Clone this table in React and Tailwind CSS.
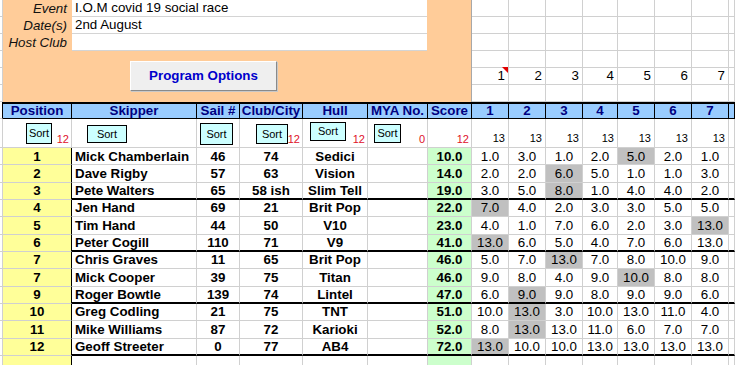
// Race results sheet - spreadsheet style view
import { Fragment } from "react";

const GRID =
  "grid grid-cols-[3px_69px_125px_43px_63px_65px_60px_44px_37px_37px_37px_35px_37px_37px_37px_6px]";

const results = [
  { pos: "1", name: "Mick Chamberlain", sail: "46", club: "74", hull: "Sedici", score: "10.0", races: ["1.0", "3.0", "1.0", "2.0", "5.0", "2.0", "1.0"], drop: 4 },
  { pos: "2", name: "Dave Rigby", sail: "57", club: "63", hull: "Vision", score: "14.0", races: ["2.0", "2.0", "6.0", "5.0", "1.0", "1.0", "3.0"], drop: 2 },
  { pos: "3", name: "Pete Walters", sail: "65", club: "58 ish", hull: "Slim Tell", score: "19.0", races: ["3.0", "5.0", "8.0", "1.0", "4.0", "4.0", "2.0"], drop: 2 },
  { pos: "4", name: "Jen Hand", sail: "69", club: "21", hull: "Brit Pop", score: "22.0", races: ["7.0", "4.0", "2.0", "3.0", "3.0", "5.0", "5.0"], drop: 0 },
  { pos: "5", name: "Tim Hand", sail: "44", club: "50", hull: "V10", score: "23.0", races: ["4.0", "1.0", "7.0", "6.0", "2.0", "3.0", "13.0"], drop: 6 },
  { pos: "6", name: "Peter Cogill", sail: "110", club: "71", hull: "V9", score: "41.0", races: ["13.0", "6.0", "5.0", "4.0", "7.0", "6.0", "13.0"], drop: 0 },
  { pos: "7", name: "Chris Graves", sail: "11", club: "65", hull: "Brit Pop", score: "46.0", races: ["5.0", "7.0", "13.0", "7.0", "8.0", "10.0", "9.0"], drop: 2 },
  { pos: "7", name: "Mick Cooper", sail: "39", club: "75", hull: "Titan", score: "46.0", races: ["9.0", "8.0", "4.0", "9.0", "10.0", "8.0", "8.0"], drop: 4 },
  { pos: "9", name: "Roger Bowtle", sail: "139", club: "74", hull: "Lintel", score: "47.0", races: ["6.0", "9.0", "9.0", "8.0", "9.0", "9.0", "6.0"], drop: 1 },
  { pos: "10", name: "Greg Codling", sail: "21", club: "75", hull: "TNT", score: "51.0", races: ["10.0", "13.0", "3.0", "10.0", "13.0", "11.0", "4.0"], drop: 1 },
  { pos: "11", name: "Mike Williams", sail: "87", club: "72", hull: "Karioki", score: "52.0", races: ["8.0", "13.0", "13.0", "11.0", "6.0", "7.0", "7.0"], drop: 1 },
  { pos: "12", name: "Geoff Streeter", sail: "0", club: "77", hull: "AB4", score: "72.0", races: ["13.0", "10.0", "10.0", "13.0", "13.0", "13.0", "13.0"], drop: 0 },
];

const headers = ["Position", "Skipper", "Sail #", "Club/City", "Hull", "MYA No.", "Score", "1", "2", "3", "4", "5", "6", "7", ""];

const SortBtn = ({ className }) => (
  <div
    className={`absolute flex items-center justify-center bg-[#ccffff] border border-black text-[11px] leading-none text-black ${className}`}
  >
    Sort
  </div>
);

const RedCount = ({ children }) => (
  <span className="absolute right-[2px] bottom-[2px] text-[11px] leading-none text-[#e0102a]">{children}</span>
);

const TopSection = () => (
  <div className={`${GRID} grid-rows-[17px_17px_17px_17px_17px_17px]`}>
    <div className="col-start-2 col-span-7 row-start-1 row-span-6 bg-[#ffcc99] border-r border-r-[#a8a8a8] flex flex-col">
      {[
        ["Event", "I.O.M covid 19 social race"],
        ["Date(s)", "2nd August"],
        ["Host Club", ""],
      ].map(([label, value]) => (
        <div key={label} className="flex h-[17px]">
          <div className="w-[69px] pr-[5px] text-right italic text-[13.33px] leading-[17px] text-[#111]">{label}</div>
          <div className="w-[355px] bg-white border-b border-b-[#d4d4d4] pl-[3px] text-[13.33px] leading-[16px] text-black">
            {value}
          </div>
        </div>
      ))}
      <button className="ml-[127px] mt-[10px] w-[147px] h-[30px] bg-[#efefef] border border-t-white border-l-white border-r-[#8a8a8a] border-b-[#8a8a8a] shadow-[1px_1px_0_#c8c8c8] text-[13.33px] font-bold text-[#0000cc]">
        Program Options
      </button>
    </div>
    {Array.from({ length: 6 }).map((_, row) => (
      <Fragment key={row}>
        <div className="border-r border-b border-[#d0d0d0]" />
        {Array.from({ length: 8 }).map((_, c) => (
          <div
            key={c}
            className="relative border-r border-b border-[#d0d0d0] flex items-center justify-end pr-[3px] text-[13.33px] leading-none text-black"
          >
            {row === 4 && c < 7 ? c + 1 : ""}
            {row === 4 && c === 0 && (
              <span className="absolute -top-px right-0 w-0 h-0 border-l-[6px] border-l-transparent border-t-[6px] border-t-[#e00000]" />
            )}
          </div>
        ))}
      </Fragment>
    ))}
  </div>
);

const HeaderRow = () => (
  <div className={`${GRID} h-[17px]`}>
    <div className="bg-white border-r border-r-black border-b border-b-[#d0d0d0]" />
    {headers.map((h, i) => (
      <div
        key={i}
        className="bg-[#99ccff] border-t-2 border-t-black border-b border-b-black border-r border-r-black flex items-center justify-center text-[13.33px] font-bold leading-none text-[#000080]"
      >
        {h}
      </div>
    ))}
  </div>
);

const SortRow = () => {
  const cell = "relative border-r border-b border-[#d0d0d0]";
  return (
    <div className={`${GRID} h-[29px]`}>
      <div className={cell} />
      <div className={cell}>
        <SortBtn className="left-[23px] top-[4px] w-[26px] h-[21px]" />
        <RedCount>12</RedCount>
      </div>
      <div className={cell}>
        <SortBtn className="left-[15px] top-[6px] w-[40px] h-[18px]" />
      </div>
      <div className={cell}>
        <SortBtn className="left-[3px] top-[4px] w-[33px] h-[22px]" />
      </div>
      <div className={cell}>
        <SortBtn className="left-[16px] top-[5px] w-[32px] h-[20px]" />
        <RedCount>12</RedCount>
      </div>
      <div className={cell}>
        <SortBtn className="left-[7px] top-[3px] w-[36px] h-[19px]" />
        <RedCount>12</RedCount>
      </div>
      <div className={cell}>
        <SortBtn className="left-[6px] top-[5px] w-[27px] h-[19px]" />
        <RedCount>0</RedCount>
      </div>
      <div className={cell}>
        <RedCount>12</RedCount>
      </div>
      {Array.from({ length: 7 }).map((_, i) => (
        <div key={i} className={cell}>
          <span className="absolute right-[3px] bottom-[3px] text-[11px] leading-none text-black">13</span>
        </div>
      ))}
      <div className={cell} />
    </div>
  );
};

const DataRow = ({ r, thick }) => {
  const b = thick ? "border-b-2 border-b-black" : "border-b border-b-[#d0d0d0]";
  const c = `border-r border-r-[#d0d0d0] ${b} flex items-center justify-center`;
  return (
    <div className={`${GRID} h-[17.33px] text-[13.33px] leading-none text-black`}>
      <div className="border-r border-b border-[#d0d0d0]" />
      <div className="bg-[#ffff99] border-r border-r-black border-b border-b-[#d0d0d0] flex items-center justify-center font-bold">
        {r?.pos}
      </div>
      <div className={`border-r border-r-[#d0d0d0] ${b} flex items-center pl-[3px] font-bold whitespace-nowrap`}>{r?.name}</div>
      <div className={`${c} font-bold`}>{r?.sail}</div>
      <div className={`${c} font-bold`}>{r?.club}</div>
      <div className={`${c} font-bold`}>{r?.hull}</div>
      <div className={c} />
      <div className={`${c} bg-[#ccffcc] font-bold`}>{r?.score}</div>
      {Array.from({ length: 7 }).map((_, i) => (
        <div key={i} className={`${c} ${r && r.drop === i ? "bg-[#c0c0c0]" : ""}`}>
          {r?.races[i]}
        </div>
      ))}
      <div className={c} />
    </div>
  );
};

export default function App() {
  return (
    <div className="w-[735px] h-[365px] overflow-hidden bg-white font-['Liberation_Sans',Arial,sans-serif]">
      <TopSection />
      <HeaderRow />
      <SortRow />
      {results.map((r, i) => (
        <DataRow key={i} r={r} thick={i % 3 === 2} />
      ))}
      <DataRow />
    </div>
  );
}
